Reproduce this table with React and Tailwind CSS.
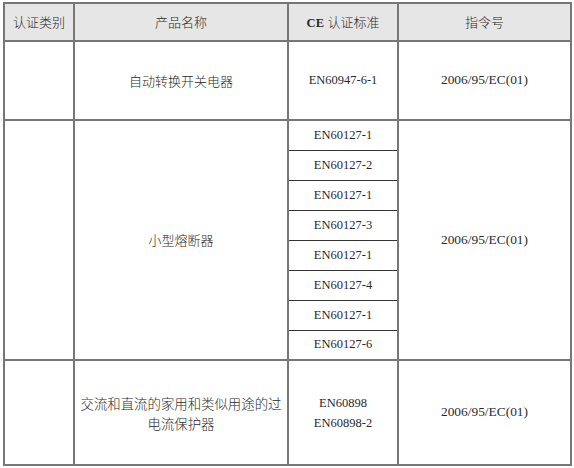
import React from 'react'

const cjk = { fontFamily: '"Noto Sans CJK SC", "Noto Sans", sans-serif' }
const serif = { fontFamily: '"Liberation Serif", "Noto Sans CJK SC", serif' }

const subs = ['EN60127-1', 'EN60127-2', 'EN60127-1', 'EN60127-3', 'EN60127-1', 'EN60127-4', 'EN60127-1', 'EN60127-6']

export default function App() {
  return (
    <div className="w-[574px] h-[468px] bg-white pl-[3px] pt-[2px] text-[#2a2a2a]">
      <table className="table-fixed border-collapse border-2 border-[#555] w-[567px]">
        <colgroup>
          <col className="w-[70px]" />
          <col className="w-[214px]" />
          <col className="w-[110px]" />
          <col className="w-[173px]" />
        </colgroup>
        <thead>
          <tr className="h-[38px] bg-[#e6e6e6] text-[13px] border-b-2 border-[#333]">
            <th className="font-light border-2 border-[#777] text-center" style={cjk}>认证类别</th>
            <th className="font-light border-2 border-[#777] text-center" style={cjk}>产品名称</th>
            <th className="font-light border-2 border-[#777] text-center">
              <span style={serif} className="font-bold text-[12.5px]">CE</span> <span style={cjk}>认证标准</span>
            </th>
            <th className="font-light border-2 border-[#777] text-center" style={cjk}>指令号</th>
          </tr>
        </thead>
        <tbody className="text-[13px]">
          <tr className="h-[79px]">
            <td className="border-2 border-[#777]" />
            <td className="border-2 border-[#777] text-center font-light" style={cjk}>自动转换开关电器</td>
            <td className="border-2 border-[#777] text-center text-[12.5px]" style={serif}>EN60947-6-1</td>
            <td className="border-2 border-[#777] text-center text-[13.4px]" style={serif}>2006/95/EC(01)</td>
          </tr>
          {subs.map((s, i) => (
            <tr key={i} className="h-[30px]">
              {i === 0 && (
                <>
                  <td rowSpan={8} className="border-2 border-[#777]" />
                  <td rowSpan={8} className="border-2 border-[#777] text-center font-light" style={cjk}>小型熔断器</td>
                </>
              )}
              <td className="border border-[#333] text-center text-[12.5px]" style={serif}>{s}</td>
              {i === 0 && (
                <td rowSpan={8} className="border-2 border-[#777] text-center text-[13.4px]" style={serif}>2006/95/EC(01)</td>
              )}
            </tr>
          ))}
          <tr className="h-[105px]">
            <td className="border-2 border-[#777]" />
            <td className="border-2 border-[#777] text-center text-[13.4px] leading-[20px] font-light" style={cjk}>
              交流和直流的家用和类似用途的过<br />电流保护器
            </td>
            <td className="border-2 border-[#777] text-center leading-[20px] text-[12.5px]" style={serif}>
              EN60898<br />EN60898-2
            </td>
            <td className="border-2 border-[#777] text-center text-[13.4px]" style={serif}>2006/95/EC(01)</td>
          </tr>
        </tbody>
      </table>
    </div>
  )
}
